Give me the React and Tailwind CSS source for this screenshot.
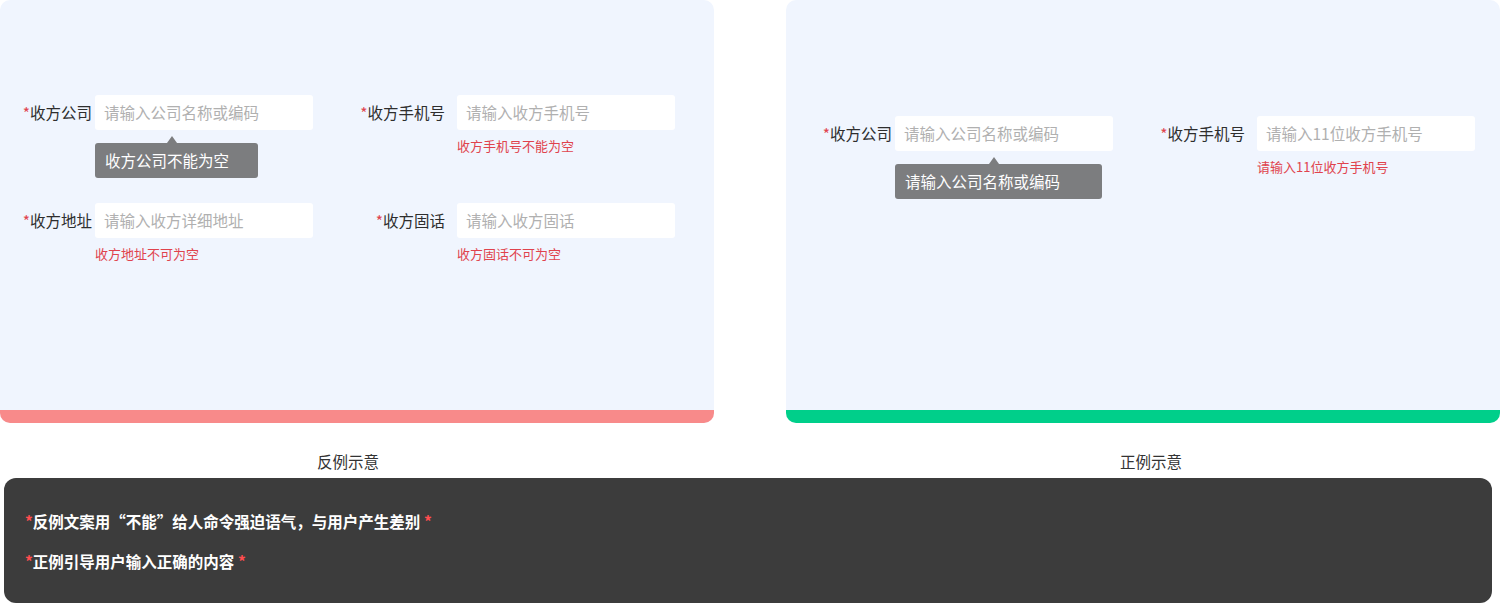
const FONT = { fontFamily: '"Noto Sans CJK SC", "Noto Sans", sans-serif' }

function Tooltip({ text, width }) {
  return (
    <div
      className="absolute left-0 top-[48px] flex h-[35px] items-center rounded-[3px] bg-[#7c7d7f] pl-[10px] text-[15.5px] text-white"
      style={{ width }}
    >
      <span className="absolute -top-[7px] left-[calc(50%-5px)] -translate-x-1/2 border-x-[5px] border-b-[7px] border-x-transparent border-b-[#7c7d7f]" />
      {text}
    </div>
  )
}

function Field({ label, placeholder, error, tooltip, tooltipW, labelW, gap }) {
  return (
    <div className="flex items-start">
      <div
        className="flex h-[35px] shrink-0 items-center justify-end text-[15.5px] text-[#2e2e2e]"
        style={{ width: labelW, marginRight: gap }}
      >
        <span className="text-[#e0434d]">*</span>
        {label}
      </div>
      <div className="relative w-[218px]">
        <div className="flex h-[35px] items-center rounded-[3px] bg-white pl-[9px] text-[15.5px] text-[#b0b0b0]">
          {placeholder}
        </div>
        {error && (
          <div className="mt-[7px] text-[13px] leading-[17px] text-[#e0434d]">{error}</div>
        )}
        {tooltip && <Tooltip text={tooltip} width={tooltipW} />}
      </div>
    </div>
  )
}

function Panel({ bar, children }) {
  return (
    <div className="flex h-[423px] w-[714px] flex-col overflow-hidden rounded-[10px] bg-[#f0f5fe]">
      <div className="flex-1">{children}</div>
      <div className={`h-[13px] ${bar}`} />
    </div>
  )
}

export default function App() {
  return (
    <div className="h-[603px] w-[1500px] overflow-hidden bg-white" style={FONT}>
      <div className="flex gap-[72px]">
        <Panel bar="bg-[#f88a8a]">
          <div className="pl-[20px] pt-[95px]">
            <div className="flex h-[108px] gap-[32px]">
              <Field
                label="收方公司"
                placeholder="请输入公司名称或编码"
                tooltip="收方公司不能为空"
                tooltipW={163}
                labelW={72}
                gap={3}
              />
              <Field
                label="收方手机号"
                placeholder="请输入收方手机号"
                error="收方手机号不能为空"
                labelW={100}
                gap={12}
              />
            </div>
            <div className="flex gap-[32px]">
              <Field
                label="收方地址"
                placeholder="请输入收方详细地址"
                error="收方地址不可为空"
                labelW={72}
                gap={3}
              />
              <Field
                label="收方固话"
                placeholder="请输入收方固话"
                error="收方固话不可为空"
                labelW={100}
                gap={12}
              />
            </div>
          </div>
        </Panel>
        <Panel bar="bg-[#00cf8a]">
          <div className="flex gap-[32px] pl-[34px] pt-[116px]">
            <Field
              label="收方公司"
              placeholder="请输入公司名称或编码"
              tooltip="请输入公司名称或编码"
              tooltipW={207}
              labelW={72}
              gap={3}
            />
            <Field
              label="收方手机号"
              placeholder="请输入11位收方手机号"
              error="请输入11位收方手机号"
              labelW={100}
              gap={12}
            />
          </div>
        </Panel>
      </div>

      <div className="flex h-[55px] items-center gap-[72px] pt-[22px] text-[15.5px] text-[#333]">
        <div className="w-[714px] pr-[18px] text-center">反例示意</div>
        <div className="w-[714px] pl-[16px] text-center">正例示意</div>
      </div>

      <div className="ml-[4px] flex h-[125px] w-[1488px] flex-col gap-[16px] rounded-[12px] bg-[#3c3c3c] pl-[21px] pt-[31px] text-[15.5px] font-bold leading-[24px] text-white">
        <div>
          <span className="text-[#ff4d4f]">*</span>反例文案用“不能”给人命令强迫语气，与用户产生差别{' '}
          <span className="text-[#ff4d4f]">*</span>
        </div>
        <div>
          <span className="text-[#ff4d4f]">*</span>正例引导用户输入正确的内容{' '}
          <span className="text-[#ff4d4f]">*</span>
        </div>
      </div>
    </div>
  )
}
